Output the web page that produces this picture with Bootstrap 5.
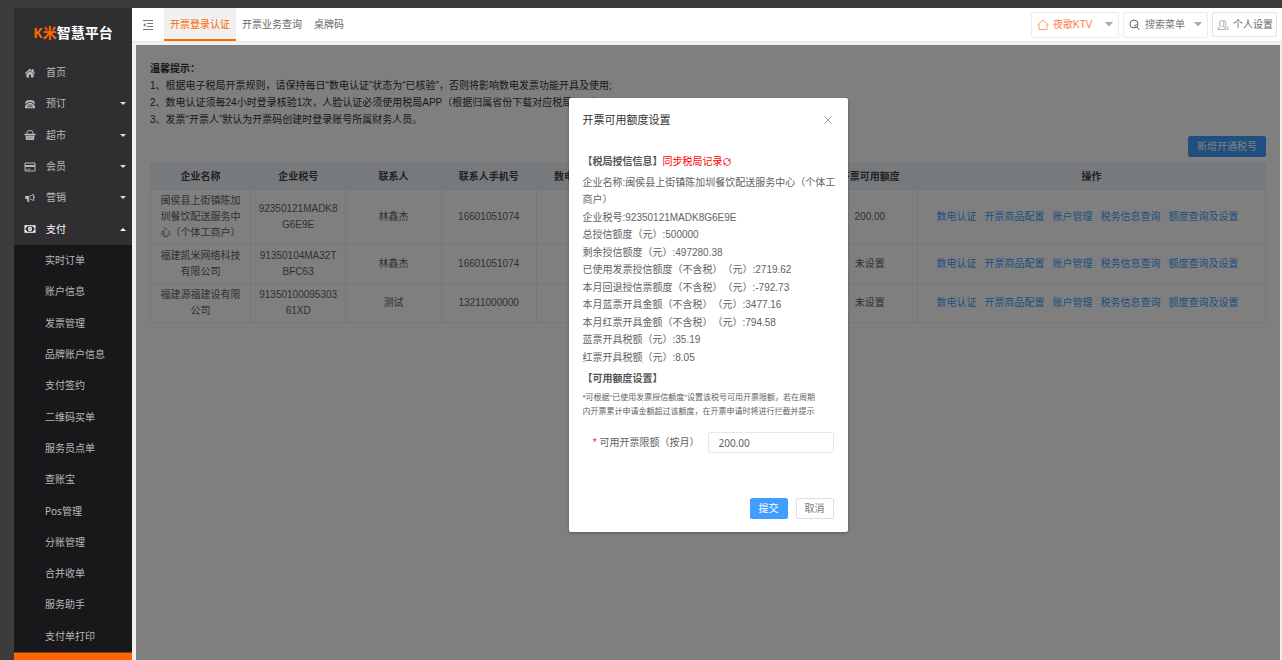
<!DOCTYPE html>
<html lang="zh-CN">
<head>
<meta charset="utf-8">
<meta name="viewport" content="width=device-width, initial-scale=1">
<title>K米智慧平台</title>
<link href="https://cdn.jsdelivr.net/npm/bootstrap@5.3.0/dist/css/bootstrap.min.css" rel="stylesheet">
<style>
:root { --brand: #ff6600; --blue: #409eff; }
body { background: #3c3c3c; font: 10px/17px "Liberation Sans", "Noto Sans CJK SC", sans-serif; color: #333; text-spacing-trim: space-all; font-feature-settings: "chws" 0; }
a { text-decoration: none; }
.app-shell { min-height: 100vh; padding: 8px 0 0 14px; }
/* sidebar */
.side-bar { width: 118px; background: #2f2f31; font-family: "Noto Sans", "Noto Sans CJK SC", sans-serif; }
.logo-box { height: 49px; color: #fff; font-size: 14px; font-weight: 700; }
.logo-box span { color: var(--brand); }
.side-bar ul, .side-sub { flex: 1 1 0; }
.side-menu { flex-grow: 6 !important; }
.side-sub { flex-grow: 13 !important; background: #18181a; }
.side-bar li { flex: 1 1 0; }
.side-bar a { height: 100%; color: #b9b9b9; }
.side-menu a { padding: 0 6px 0 10px; gap: 10px; }
.side-menu a.open { color: #fff; }
.side-sub a { padding-left: 31px; }
.side-menu .caret { width: 6px; height: 3px; }
.side-foot { height: 8px; background: var(--brand); border-top: 1px solid #8a3d08; }
/* top bar */
.page-area { background: #f0f0f0; min-width: 0; }
.top-bar { background: #fff; height: 34px; border-bottom: 1px solid #e6e6e6; padding: 0 5px 0 10px; }
.top-tabs { margin-left: 10px; }
.top-tabs a { color: #666; padding: 0 6px; border-bottom: 2px solid transparent; line-height: 33px; height: 33px; }
.top-tabs a.active { color: var(--brand); background: #f0f0f0; border-color: var(--brand); }
.top-box { height: 26px; border: 1px solid #ececec; border-radius: 2px; padding: 0 5px; background: #fff; color: #777; }
.top-box select { appearance: none; border: 0; background: transparent; color: inherit; font: inherit; padding: 0; outline: 0; }
.top-box.venue { width: 88px; color: #ff7744; }
.top-box.search { width: 85px; }
.top-box.user { width: 65px; height: 25px; border-color: #e4e4e4; color: #666; }
/* content */
.main-pane { background: #fff; margin: 3px 2px 0 4px; padding: 15px 14px; }
.tips { color: #303133; }
.add-row { padding: 8px 0 6px; }
.btn-flat { font-size: 10px; line-height: 19px; padding: 0 8px; border-radius: 2px; }
.btn-blue, .btn-blue:hover { background: var(--blue); border-color: var(--blue); color: #fff; }
.btn-line { border-color: #dcdfe6; color: #777; }
.tax-table { table-layout: fixed; font-size: 10px; line-height: 16px; color: #606266; border-color: #ebeef5; text-align: center; vertical-align: middle; }
.tax-table > :not(caption) > * > * { padding: 3px 7px; color: inherit; word-break: break-all; }
.tax-table > thead > tr > th { background: #eff4fa; color: #444; padding: 5px 2px 4px; white-space: nowrap; }
.col-name { width: 100px; }
.col-ops { width: 348px; }
.ops a { color: var(--blue); margin-right: 8px; }
/* dialog */
.dim-layer { inset: 0; background: rgba(0,0,0,.5); padding-top: 53px; }
.quota-box { width: 279px; min-height: 434px; border: 0; border-radius: 2px; box-shadow: 0 1px 3px rgba(0,0,0,.3); padding: 13px 11px 13px 14px; background: #fff; color: #606266; }
.quota-box h1 { font-size: 11px; line-height: 18px; color: #303133; }
.quota-box h2 { font-size: 10px; line-height: 17px; font-weight: 700; color: #555; }
.quota-box .sync { color: #f00; }
.quota-list { flex: 1 1 0; }
.hint { font-size: 8px; line-height: 14px; margin-bottom: 13px; }
.close-x { width: 12px; height: 12px; line-height: 0; }
.quota-input { width: 126px; height: 21px; border: 1px solid #e4e7ed; border-radius: 2px; padding: 0 10px; font: 10px "Noto Sans", sans-serif; color: #606266; min-height: 0; }
.pad-end { padding-right: 3px; }
.quota-actions { padding-top: 45px; }
</style>
</head>
<body>
<div class="app-shell d-flex">
  <nav class="side-bar d-flex flex-column flex-shrink-0">
    <div class="logo-box d-flex align-items-center justify-content-center"><span>K米</span>智慧平台</div>
    <ul class="side-menu list-unstyled d-flex flex-column m-0">
      <li><a href="#" class="d-flex align-items-center"><svg width="12" height="12" viewBox="0 0 12 12" fill="currentColor"><path d="M6 1.600 1 6l.8.900L6 3.300l4.200 3.600.8-.9L9.700 4.900V2.200H8V3.400z"/><path d="M2.400 7 6 4 9.600 7v3.500H7V7.800H5v2.700H2.400z"/></svg><span>首页</span></a></li>
      <li><a href="#" class="d-flex align-items-center"><svg width="12" height="12" viewBox="0 0 12 12" fill="currentColor"><path d="M1 5.500C1 3 3 2 6 2s5 1 5 3.500H8.500V4.300h-5v1.200z"/><path d="M2.700 6h1.300V5h4v1h1.300l1.700 2v2.300H1V8z"/><path stroke="#2f2f31" stroke-width=".7" d="M3.500 7h5M3 8.700h6"/></svg><span class="flex-grow-1">预订</span><svg class="caret" viewBox="0 0 6 3" fill="#ddd"><path d="M0 0h6L3 3z"/></svg></a></li>
      <li><a href="#" class="d-flex align-items-center"><svg width="12" height="12" viewBox="0 0 12 12" fill="currentColor"><path fill="none" stroke="currentColor" d="M3 5V3.500Q3 1.500 6 1.500T9 3.500V5"/><path d="M.5 4.800h11v1.400H.5zM1.500 6.700h9L10 11H2z"/><path stroke="#2f2f31" stroke-width=".4" d="M4 7.500V10M6 7.500V10M8 7.500V10"/></svg><span class="flex-grow-1">超市</span><svg class="caret" viewBox="0 0 6 3" fill="#ddd"><path d="M0 0h6L3 3z"/></svg></a></li>
      <li><a href="#" class="d-flex align-items-center"><svg width="12" height="12" viewBox="0 0 12 12" fill="currentColor"><path fill="none" stroke="currentColor" d="M1 2h10v8H1z"/><path d="M1 4h10v2H1zM2.200 7.700h1.300v1H2.200zM4.200 7.700h2v1h-2z"/></svg><span class="flex-grow-1">会员</span><svg class="caret" viewBox="0 0 6 3" fill="#ddd"><path d="M0 0h6L3 3z"/></svg></a></li>
      <li><a href="#" class="d-flex align-items-center"><svg width="12" height="12" viewBox="0 0 12 12" fill="currentColor"><path d="M1.200 4h4v3H4.600l.8 3H3.600L2.800 7H1.200z"/><path fill="none" stroke="currentColor" stroke-width=".9" d="M5.500 4Q8 4 9.600 2.200v6.600Q8 7 5.500 7"/><path d="M10 4.700h1v1.600h-1z"/></svg><span class="flex-grow-1">营销</span><svg class="caret" viewBox="0 0 6 3" fill="#ddd"><path d="M0 0h6L3 3z"/></svg></a></li>
      <li><a href="#" class="open d-flex align-items-center"><svg width="12" height="12" viewBox="0 0 12 12" fill="currentColor"><path fill-rule="evenodd" d="M.5 2.300h11v7.400H.5zM3 3.300Q3 4.700 1.500 4.700v2.600Q3 7.300 3 8.700h6Q9 7.300 10.500 7.300V4.700Q9 4.700 9 3.300z"/><path fill-rule="evenodd" d="M6 3.700a2 2.300 0 1 1 0 4.600 2 2.300 0 0 1 0-4.600zM5.600 4.700v2.600h.8V4.700z"/></svg><span class="flex-grow-1">支付</span><svg class="caret" viewBox="0 0 6 3" fill="#fff"><path d="M0 3h6L3 0z"/></svg></a></li>
    </ul>
    <ul class="side-sub list-unstyled d-flex flex-column m-0">
      <li><a href="#" class="d-flex align-items-center">实时订单</a></li>
      <li><a href="#" class="d-flex align-items-center">账户信息</a></li>
      <li><a href="#" class="d-flex align-items-center">发票管理</a></li>
      <li><a href="#" class="d-flex align-items-center">品牌账户信息</a></li>
      <li><a href="#" class="d-flex align-items-center">支付签约</a></li>
      <li><a href="#" class="d-flex align-items-center">二维码买单</a></li>
      <li><a href="#" class="d-flex align-items-center">服务员点单</a></li>
      <li><a href="#" class="d-flex align-items-center">查账宝</a></li>
      <li><a href="#" class="d-flex align-items-center">Pos管理</a></li>
      <li><a href="#" class="d-flex align-items-center">分账管理</a></li>
      <li><a href="#" class="d-flex align-items-center">合并收单</a></li>
      <li><a href="#" class="d-flex align-items-center">服务助手</a></li>
      <li><a href="#" class="d-flex align-items-center">支付单打印</a></li>
    </ul>
    <div class="side-foot"></div>
  </nav>

  <div class="page-area flex-grow-1 d-flex flex-column">
    <header class="top-bar d-flex align-items-center">
      <button type="button" class="btn p-0 border-0 lh-1" aria-label="收起菜单"><svg width="12" height="12" viewBox="0 0 12 12" fill="none" stroke="#777"><path d="M1 1.500h10M5 4.500h6M5 7.500h6M1 10.500h10"/><path fill="#777" stroke="none" d="M1 6l2.500-2v4z"/></svg></button>
      <div class="top-tabs d-flex flex-grow-1">
        <a href="#" class="active">开票登录认证</a>
        <a href="#">开票业务查询</a>
        <a href="#">桌牌码</a>
      </div>
      <div class="d-flex align-items-center gap-1">
        <div class="top-box venue d-flex align-items-center">
          <svg width="12" height="12" viewBox="0 0 12 12" fill="none" stroke="#ff8c42" stroke-width=".8"><path d="M.5 6 6 1l5.500 5M2 5v5.500h8V5"/></svg>
          <select class="flex-grow-1 ms-1" aria-label="门店"><option>夜歌KTV</option></select>
          <svg width="8" height="5" viewBox="0 0 8 5" fill="#aaa"><path d="M0 0h8L4 4.500z"/></svg>
        </div>
        <div class="top-box search d-flex align-items-center">
          <svg width="12" height="12" viewBox="0 0 12 12" fill="none" stroke="#555" stroke-width=".9"><circle cx="5" cy="5" r="4"/><path d="M8 8l2.500 3M5 7.300A2.300 2.300 0 0 0 7.300 5"/></svg>
          <select class="flex-grow-1 ms-1" aria-label="搜索菜单"><option>搜索菜单</option></select>
          <svg width="8" height="5" viewBox="0 0 8 5" fill="#aaa"><path d="M0 0h8L4 4.500z"/></svg>
        </div>
        <button type="button" class="top-box user d-flex align-items-center p-0 ps-1">
          <svg class="flex-shrink-0" width="12" height="12" viewBox="0 0 12 12" fill="none" stroke="#999" stroke-width=".8"><path d="M1 10.500V9.200L3.700 7.500Q2.500 6.200 2.500 4 2.500 1.500 4.700 1.500T7 4Q7 6.200 5.800 7.500L8.500 9.200v1.300zM6.800 1.500Q9 1.500 9 4 9 6 8 7.200l3 1.800v1.500H9.500"/></svg>
          <span class="ms-1 text-nowrap">个人设置</span>
        </button>
      </div>
    </header>

    <main class="main-pane position-relative flex-grow-1">
      <div class="tips">
        <b>温馨提示&#xFF1A;</b><br>
        1、根据电子税局开票规则&#xFF0C;请保持每日“数电认证”状态为“已核验”&#xFF0C;否则将影响数电发票功能开具及使用;<br>
        2、数电认证须每24小时登录核验1次&#xFF0C;人脸认证必须使用税局APP&#xFF08;根据归属省份下载对应税局APP&#xFF09;<br>
        3、发票“开票人”默认为开票码创建时登录账号所属财务人员。
      </div>
      <div class="add-row text-end"><button type="button" class="btn btn-flat btn-blue">新增开通税号</button></div>
      <table class="table table-bordered tax-table mb-0">
        <colgroup><col class="col-name"><col><col><col><col><col><col><col><col class="col-ops"></colgroup>
        <thead><tr><th>企业名称</th><th>企业税号</th><th>联系人</th><th>联系人手机号</th><th>数电认证状态</th><th></th><th></th><th>开票可用额度</th><th>操作</th></tr></thead>
        <tbody>
          <tr><td>闽侯县上街镇陈加圳餐饮配送服务中心&#xFF08;个体工商户&#xFF09;</td><td>92350121MADK8G6E9E</td><td>林鑫杰</td><td>16601051074</td><td></td><td></td><td></td><td>200.00</td>
            <td><div class="ops d-flex justify-content-center"><a href="#">数电认证</a><a href="#">开票商品配置</a><a href="#">账户管理</a><a href="#">税务信息查询</a><a href="#">额度查询及设置</a></div></td></tr>
          <tr><td>福建凯米网络科技有限公司</td><td>91350104MA32TBFC63</td><td>林鑫杰</td><td>16601051074</td><td></td><td></td><td></td><td>未设置</td>
            <td><div class="ops d-flex justify-content-center"><a href="#">数电认证</a><a href="#">开票商品配置</a><a href="#">账户管理</a><a href="#">税务信息查询</a><a href="#">额度查询及设置</a></div></td></tr>
          <tr><td>福建源福建设有限公司</td><td>9135010009530361XD</td><td>测试</td><td>13211000000</td><td></td><td></td><td></td><td>未设置</td>
            <td><div class="ops d-flex justify-content-center"><a href="#">数电认证</a><a href="#">开票商品配置</a><a href="#">账户管理</a><a href="#">税务信息查询</a><a href="#">额度查询及设置</a></div></td></tr>
        </tbody>
      </table>

      <div class="dim-layer position-absolute d-flex justify-content-center align-items-start">
        <form class="modal-content quota-box" role="dialog" aria-labelledby="quotaTitle">
          <div class="d-flex justify-content-between align-items-center mb-4 pad-end">
            <h1 id="quotaTitle" class="m-0 fw-normal">开票可用额度设置</h1>
            <button type="button" class="btn p-0 border-0 close-x" aria-label="关闭"><svg width="8" height="8" viewBox="0 0 8 8" stroke="#909399" stroke-width=".9"><path d="M.5.5l7 7M7.500.5l-7 7"/></svg></button>
          </div>
          <h2 class="mb-1">【税局授信信息】<a href="#" class="sync fw-normal">同步税局记录<svg width="8" height="8" viewBox="0 0 8 8" fill="none" stroke="#f00" stroke-width=".8"><path d="M.9 5A3.200 3.200 0 0 1 6.700 2.300M7.100 3A3.200 3.200 0 0 1 1.300 5.700M6.900.6v1.900H5M1.100 7.400V5.500H3"/></svg></a></h2>
          <ul class="quota-list list-unstyled d-flex flex-column justify-content-between m-0">
            <li>企业名称:闽侯县上街镇陈加圳餐饮配送服务中心&#xFF08;个体工商户&#xFF09;</li>
            <li>企业税号:92350121MADK8G6E9E</li>
            <li>总授信额度&#xFF08;元&#xFF09;:500000</li>
            <li>剩余授信额度&#xFF08;元&#xFF09;:497280.38</li>
            <li>已使用发票授信额度&#xFF08;不含税&#xFF09;&#xFF08;元&#xFF09;:2719.62</li>
            <li>本月回退授信票额度&#xFF08;不含税&#xFF09;&#xFF08;元&#xFF09;:-792.73</li>
            <li>本月蓝票开具金额&#xFF08;不含税&#xFF09;&#xFF08;元&#xFF09;:3477.16</li>
            <li>本月红票开具金额&#xFF08;不含税&#xFF09;&#xFF08;元&#xFF09;:794.58</li>
            <li>蓝票开具税额&#xFF08;元&#xFF09;:35.19</li>
            <li>红票开具税额&#xFF08;元&#xFF09;:8.05</li>
          </ul>
          <h2 class="mt-1 mb-1">【可用额度设置】</h2>
          <p class="hint">*可根据“已使用发票授信额度”设置该税号可用开票限额&#xFF0C;若在周期<br>内开票累计申请金额超过该额度&#xFF0C;在开票申请时将进行拦截并提示</p>
          <div class="d-flex align-items-center justify-content-end gap-2 pad-end">
            <label for="quota"><span class="text-danger">*</span> 可用开票限额&#xFF08;按月&#xFF09;</label>
            <input id="quota" class="quota-input" type="text" value="200.00">
          </div>
          <div class="quota-actions d-flex justify-content-end gap-2 pad-end">
            <button type="submit" class="btn btn-flat btn-blue">提交</button>
            <button type="button" class="btn btn-flat btn-line">取消</button>
          </div>
        </form>
      </div>
    </main>
  </div>
</div>
<script src="https://cdn.jsdelivr.net/npm/bootstrap@5.3.0/dist/js/bootstrap.bundle.min.js"></script>
</body>
</html>
